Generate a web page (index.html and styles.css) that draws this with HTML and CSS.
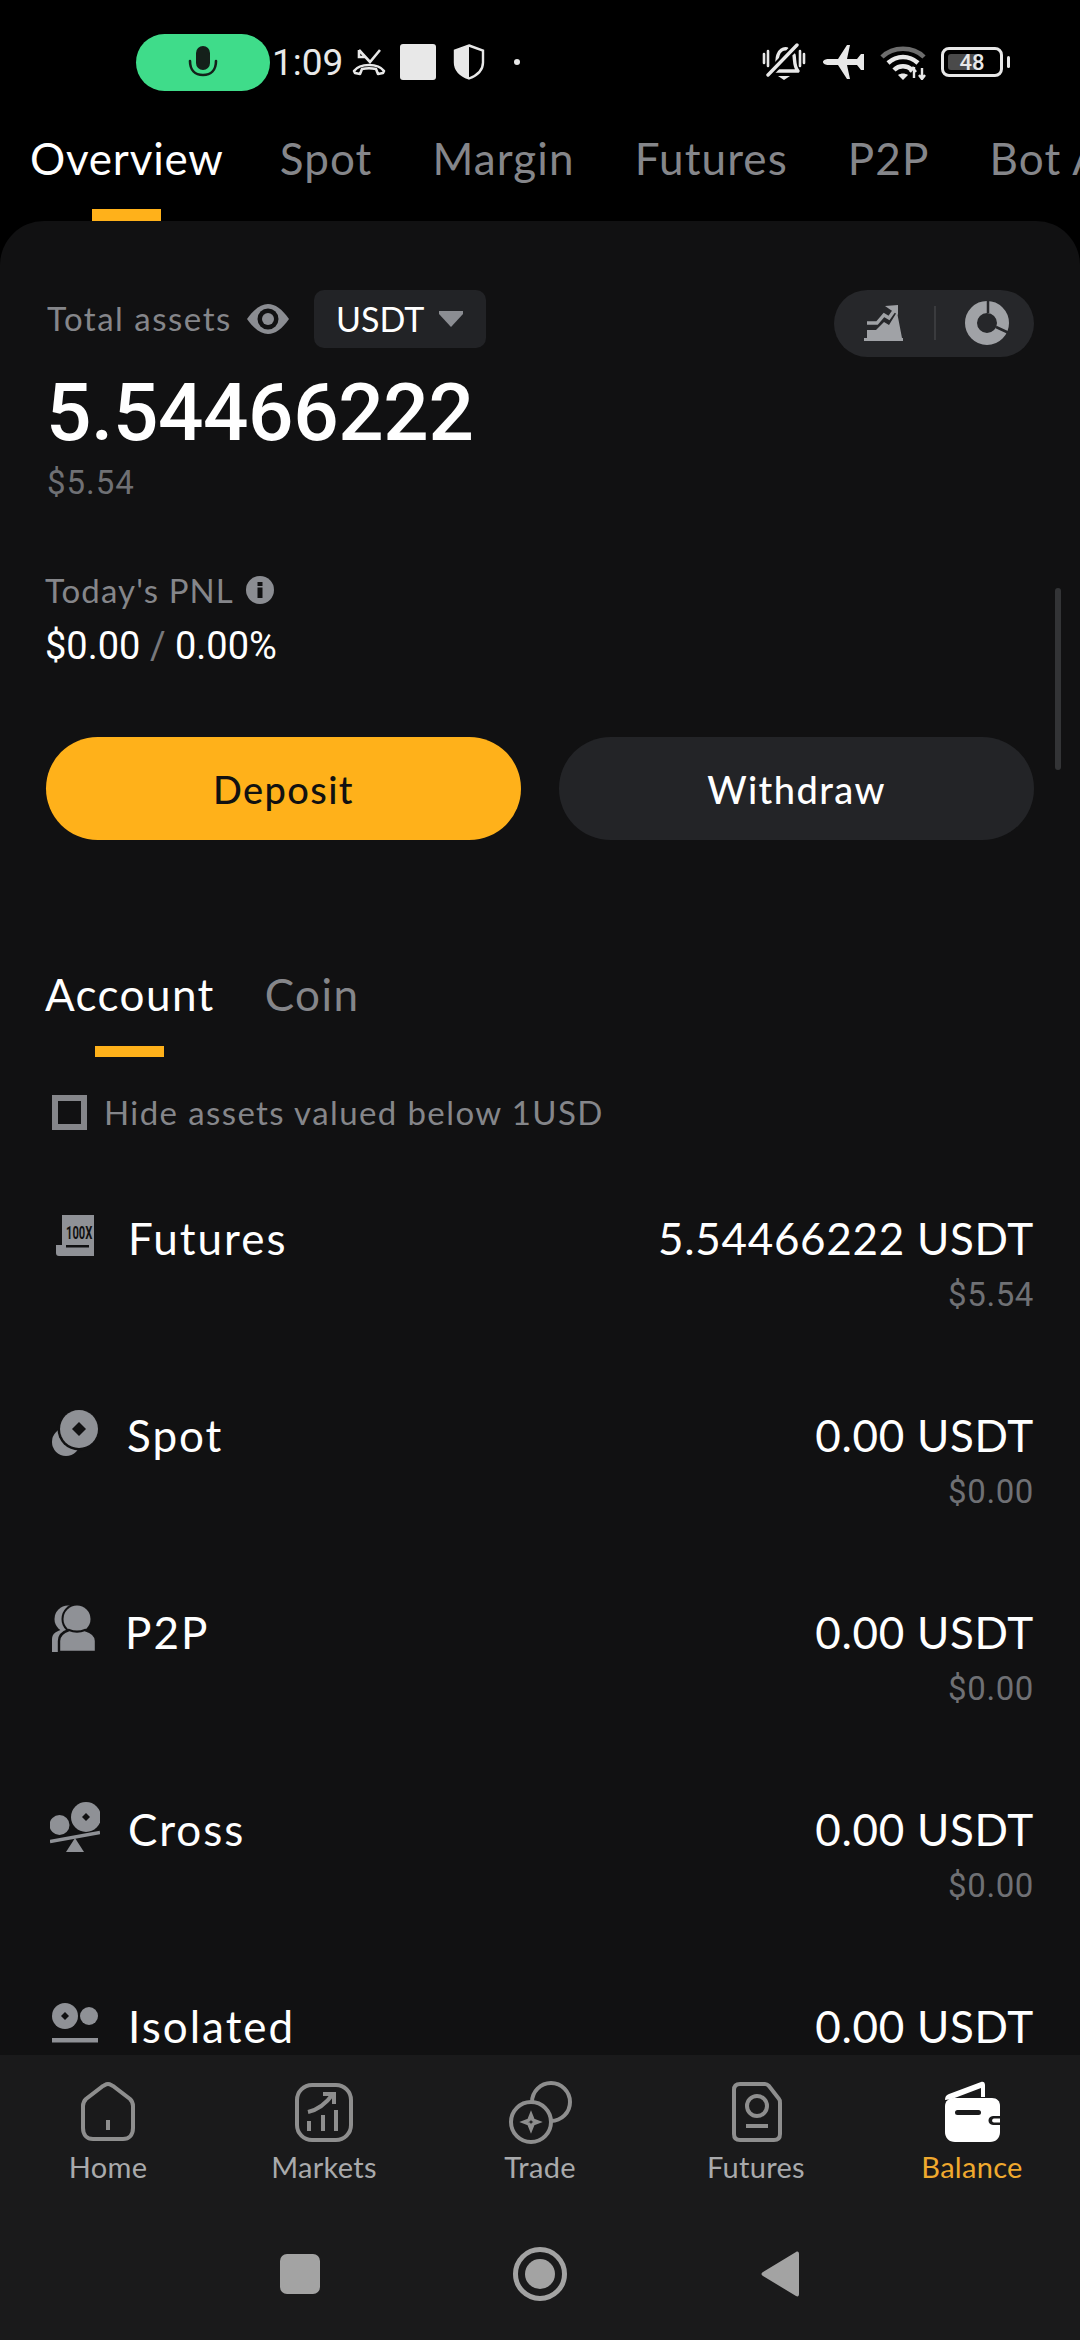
FILE: index.html
```html
<!DOCTYPE html>
<html lang="en">
<head>
<meta charset="utf-8">
<title>Balance</title>
<link rel="stylesheet" href="styles.css">
</head>
<body>
<div class="page">
  <header class="top">
    <div class="status">
      <div class="pill">
        <svg class="i-mic" viewBox="0 0 30 34"><rect x="8" y="1" width="14" height="24" rx="7" fill="#14201a"/><path d="M2 16c0 9 5 14 13 14s13-5 13-14" fill="none" stroke="#14201a" stroke-width="2.6" stroke-linecap="round"/></svg>
      </div>
      <span class="time">1:09</span>
      <svg class="i-call" viewBox="0 0 34 30"><path d="M7 3v7h7M7 3l11 12L28 3" fill="none" stroke="#e8e8e8" stroke-width="2.600"/><path d="M2 24c6-8 24-8 30 0l-1 2-5 1-2-5c-5-1-9-1-14 0l-2 5-5-1z" fill="none" stroke="#e8e8e8" stroke-width="2.600" stroke-linejoin="round"/></svg>
      <span class="sq"></span>
      <svg class="i-shield" viewBox="0 0 32 36"><path d="M16 1.500l14 5v12c0 8-6 13-14 16-8-3-14-8-14-16v-12z" fill="#000" stroke="#e8e8e8" stroke-width="2.400"/><path d="M16 1.500v33c-8-3-14-8-14-16v-12z" fill="#e8e8e8"/></svg>
      <span class="dot"></span>
      <div class="status-right">
        <svg class="i-bell" viewBox="0 0 44 38"><path d="M13 28c3-4 1-11 3-16 1-4 5-7 9-6l7 6c1 6 0 12 4 16H9z" fill="none" stroke="#e8e8e8" stroke-width="3.400" stroke-linejoin="round"/><path d="M5 33L36 1" stroke="#000" stroke-width="8"/><path d="M6 32L35 2" stroke="#e8e8e8" stroke-width="3.400" stroke-linecap="round"/><path d="M16 33h12l-6 4z" fill="#e8e8e8"/><path d="M2 11v9M6 8v15M38 8v15M42 11v9" stroke="#e8e8e8" stroke-width="2.600" stroke-linecap="round"/></svg>
        <svg class="i-plane" viewBox="0 0 44 36"><path d="M1 18c0-2 3-3 5-3h10L25 1h3l-3 14h10l4-5h3v16h-3l-4-5H25l3 14h-3L16 21H6c-2 0-5-1-5-3z" fill="#e8e8e8"/></svg>
        <svg class="i-wifi" viewBox="0 0 46 36"><path d="M2 13C13 2 33 2 44 13" fill="none" stroke="#6d6d6d" stroke-width="4.500"/><path d="M8 19c9-8 21-8 30 0" fill="none" stroke="#e8e8e8" stroke-width="4.500"/><path d="M14 26c5-5 13-5 18 0" fill="none" stroke="#e8e8e8" stroke-width="4.500"/><path d="M18 31c3-2 7-2 10 0l-5 5z" fill="#e8e8e8"/><path d="M34 23v11M36 28l-3-4-3 4M42 24v11M39 31l3 4 3-4" stroke="#e8e8e8" stroke-width="2.400" fill="none"/></svg>
        <div class="battery">
          <div class="batt-body"><span class="batt-fill"></span><span class="batt-num">48</span></div>
          <span class="batt-tip"></span>
        </div>
      </div>
    </div>
    <nav class="tabs">
      <div class="tab active"><span class="tab-text">Overview</span><span class="tab-bar"></span></div>
      <div class="tab"><span class="tab-text">Spot</span></div>
      <div class="tab"><span class="tab-text">Margin</span></div>
      <div class="tab"><span class="tab-text">Futures</span></div>
      <div class="tab"><span class="tab-text">P2P</span></div>
      <div class="tab"><span class="tab-text">Bot Assets</span></div>
    </nav>
  </header>

  <main class="panel">
    <span class="scrollbar"></span>
    <section class="summary">
      <div class="total-row">
        <span class="muted-label">Total assets</span>
        <svg class="i-eye" viewBox="0 0 42 32"><path d="M0 16C7 6 14 1 21 1s14 5 21 15C35 26 28 31 21 31S7 26 0 16z" fill="#8b8d92"/><circle cx="21" cy="16" r="10.500" fill="#111112"/><circle cx="21" cy="16" r="6" fill="#8b8d92"/></svg>
        <div class="chip"><span>USDT</span><svg class="i-caret" viewBox="0 0 24 16"><path d="M0 0h24v3L12 16 0 3z" fill="#8b8d92"/></svg></div>
        <div class="toggle">
          <svg class="i-stairs" viewBox="0 0 40 36"><path d="M0 33h39v3H0z" fill="#a0a2a6"/><path d="M3 33v-8h9l8-8 5 3 8-13 5 26z" fill="#a0a2a6"/><path d="M3 18h10l7-8 5 3 7-10" fill="none" stroke="#a0a2a6" stroke-width="3.400"/><path d="M21 1l13-1v10z" fill="#a0a2a6"/></svg>
          <span class="divider"></span>
          <svg class="i-donut" viewBox="0 0 44 44"><circle cx="22" cy="22" r="16" fill="none" stroke="#a0a2a6" stroke-width="12"/><path d="M23 12V0M31 26l13 6" stroke="#26272a" stroke-width="2.500"/></svg>
        </div>
      </div>
      <div class="big-num">5.54466222</div>
      <div class="usd">$5.54</div>
      <div class="pnl-row">
        <span class="muted-label">Today's PNL</span>
        <svg class="i-info" viewBox="0 0 28 28"><circle cx="14" cy="14" r="14" fill="#8b8d92"/><rect x="11.500" y="11.500" width="5" height="10.500" fill="#111112"/><rect x="11.500" y="6" width="5" height="4" fill="#111112"/></svg>
      </div>
      <div class="pnl-val">$0.00 <span class="slash">/</span> 0.00%</div>
      <div class="actions">
        <div class="btn btn-primary">Deposit</div>
        <div class="btn btn-dark">Withdraw</div>
      </div>
    </section>

    <section class="subtabs">
      <div class="sub active"><span class="sub-text">Account</span><span class="sub-bar"></span></div>
      <div class="sub"><span class="sub-text">Coin</span></div>
    </section>

    <div class="hide-row"><span class="check"></span><span class="muted-label">Hide assets valued below 1USD</span></div>

    <section class="rows">
      <div class="row">
        <svg class="ri ri-fut" viewBox="0 0 38 41"><path d="M6 0h32v41H3c-2 0-3-1-3-3v-8h6z" fill="#8f9196"/><text class="hundred" transform="translate(10 24) scale(.62 1)">100X</text><rect x="10" y="30" width="23" height="2.500" fill="#111112"/></svg>
        <span class="row-name">Futures</span>
        <div class="row-vals"><span class="row-val">5.54466222 USDT</span><span class="row-usd">$5.54</span></div>
      </div>
      <div class="row">
        <svg class="ri ri-spot" viewBox="0 0 46 46"><circle cx="14" cy="32" r="14" fill="#8f9196"/><circle cx="27" cy="19" r="21.500" fill="#111112"/><circle cx="27" cy="19" r="19" fill="#8f9196"/><path d="M27 12l7 7-7 7-7-7z" fill="#111112"/></svg>
        <span class="row-name row-name-spot">Spot</span>
        <div class="row-vals"><span class="row-val">0.00 USDT</span><span class="row-usd">$0.00</span></div>
      </div>
      <div class="row">
        <svg class="ri ri-p2p" viewBox="0 0 44 47"><circle cx="16" cy="14" r="13.500" fill="#8f9196"/><path d="M0 47V34c0-6 5-8 12-10h12v23z" fill="#8f9196"/><circle cx="25" cy="14" r="15.500" fill="#111112"/><circle cx="25" cy="14" r="13.500" fill="#8f9196"/><path d="M7 47V36c0-6 4-9 10-11 5 2 11 2 16 0 7 2 11 5 11 11v11z" fill="#8f9196" stroke="#111112" stroke-width="2.400"/></svg>
        <span class="row-name row-name-p2p">P2P</span>
        <div class="row-vals"><span class="row-val">0.00 USDT</span><span class="row-usd">$0.00</span></div>
      </div>
      <div class="row">
        <svg class="ri ri-cross" viewBox="0 0 50 50"><circle cx="9.500" cy="23" r="10" fill="#8f9196"/><circle cx="36" cy="15" r="15" fill="#8f9196"/><path d="M36 11l4 4-4 4-4-4z" fill="#111112"/><path d="M0 39.500l50-9" stroke="#8f9196" stroke-width="3.600"/><path d="M16 50h18l-9-14z" fill="#8f9196"/></svg>
        <span class="row-name">Cross</span>
        <div class="row-vals"><span class="row-val">0.00 USDT</span><span class="row-usd">$0.00</span></div>
      </div>
      <div class="row">
        <svg class="ri ri-iso" viewBox="0 0 46 40"><circle cx="13" cy="13" r="13" fill="#8f9196"/><path d="M13 9l4 4-4 4-4-4z" fill="#111112"/><circle cx="37" cy="13" r="9" fill="#8f9196"/><rect y="35" width="46" height="4.500" fill="#8f9196"/></svg>
        <span class="row-name">Isolated</span>
        <div class="row-vals"><span class="row-val">0.00 USDT</span></div>
      </div>
    </section>
  </main>

  <footer class="bottom">
    <nav class="nav">
      <div class="nav-item">
        <svg class="ni" viewBox="0 0 64 64"><path d="M32 4c2 0 3 1 5 2l17 13c2 2 3 4 3 7v22c0 7-4 11-10 11H17c-6 0-10-4-10-11V26c0-3 1-5 3-7L27 6c2-1 3-2 5-2z" fill="none" stroke="#8e8e8e" stroke-width="4"/><path d="M32 40v10" stroke="#8e8e8e" stroke-width="4"/></svg>
        <span>Home</span>
      </div>
      <div class="nav-item">
        <svg class="ni" viewBox="0 0 64 64"><rect x="5" y="5" width="54" height="55" rx="15" fill="none" stroke="#8e8e8e" stroke-width="4"/><path d="M16 32c9-2 17-7 25-18M31 14h11v10" fill="none" stroke="#8e8e8e" stroke-width="4"/><path d="M17 41v10M31 35v16M44 30v21" stroke="#8e8e8e" stroke-width="4"/></svg>
        <span>Markets</span>
      </div>
      <div class="nav-item">
        <svg class="ni" viewBox="0 0 64 64"><circle cx="43" cy="22" r="19" fill="none" stroke="#8e8e8e" stroke-width="4"/><circle cx="23" cy="42" r="20" fill="#1a1a1b" stroke="#8e8e8e" stroke-width="4"/><path d="M23 35l2 5 5 2-5 2-2 5-2-5-5-2 5-2z" fill="none" stroke="#8e8e8e" stroke-width="3.500"/></svg>
        <span>Trade</span>
      </div>
      <div class="nav-item">
        <svg class="ni" viewBox="0 0 64 64"><path d="M16 4h25c2 0 3 1 4 2l10 13c1 1 1 2 1 4v31c0 4-2 6-6 6H16c-4 0-6-2-6-6V10c0-4 2-6 6-6z" fill="none" stroke="#8e8e8e" stroke-width="4"/><circle cx="33" cy="26" r="10" fill="none" stroke="#8e8e8e" stroke-width="4"/><path d="M22 46h22" stroke="#8e8e8e" stroke-width="4"/></svg>
        <span>Futures</span>
      </div>
      <div class="nav-item nav-active">
        <svg class="ni" viewBox="0 0 64 64"><path d="M5 20c0-3 1-5 4-6L41 2c2-1 4 0 4 3v12h-4V8L12 19z" fill="#fff"/><path d="M14 18h38c5 0 8 3 8 8v26c0 6-4 10-10 10H15C9 62 5 58 5 52V26c0-5 4-8 9-8z" fill="#fff"/><rect x="15" y="30" width="26" height="5" rx="2.500" fill="#1a1a1b"/><path d="M60 36H53c-6 0-6 9 0 9h7z" fill="#1a1a1b"/><path d="M60 38.500h-6c-2.500 0-2.500 4 0 4h6z" fill="#fff"/></svg>
        <span>Balance</span>
      </div>
    </nav>
    <div class="sysnav">
      <span class="sys-square"></span>
      <span class="sys-circle"><span class="sys-core"></span></span>
      <svg class="sys-back" viewBox="0 0 38 46"><path d="M35 1c2-1 3 0 3 2v40c0 2-1 3-3 2L2 25c-2-1-2-3 0-4z" fill="#a3a3a3"/></svg>
    </div>
  </footer>
</div>
</body>
</html>
```
FILE: styles.css
```css
* { box-sizing: border-box; }
html, body { margin: 0; padding: 0; background: #000; }
body { font-family: "Lato", "Liberation Sans", sans-serif; color: #fff; }
.page { width: 1080px; height: 2340px; display: flex; flex-direction: column; overflow: hidden; background: #000; }

.top { flex: none; background: #000; }
.status { height: 124px; display: flex; align-items: center; padding-left: 136px; }
.pill { width: 134px; height: 57px; border-radius: 29px; background: #3fdc8a; display: flex; align-items: center; justify-content: center; }
.i-mic { width: 30px; height: 34px; }
.time { margin-left: 2px; font-size: 37px; color: #e8e8e8; width: 70px; font-family: "Roboto", sans-serif; }
.i-call { width: 34px; height: 30px; margin-left: 10px; }
.sq { width: 36px; height: 36px; margin-left: 14px; border-radius: 3px; background: #e8e8e8; }
.i-shield { width: 32px; height: 36px; margin-left: 17px; }
.dot { width: 6px; height: 6px; margin-left: 29px; border-radius: 50%; background: #e8e8e8; }
.status-right { margin-left: auto; padding-right: 70px; display: flex; align-items: center; }
.i-bell { width: 44px; height: 38px; }
.i-plane { width: 44px; height: 36px; margin-left: 16px; }
.i-wifi { width: 46px; height: 36px; margin-left: 14px; }
.battery { display: flex; align-items: center; margin-left: 15px; }
.batt-body { position: relative; width: 62px; height: 30px; border: 3px solid #e8e8e8; border-radius: 8px; display: flex; align-items: center; justify-content: center; }
.batt-fill { position: absolute; left: 4px; top: 4px; bottom: 4px; width: 29px; background: #4a4a4a; border-radius: 3px; }
.batt-num { position: relative; font-size: 22px; font-weight: 500; color: #e8e8e8; font-family: "Roboto", sans-serif; }
.batt-tip { width: 3px; height: 12px; margin-left: 4px; background: #e8e8e8; border-radius: 2px; }

.tabs { height: 97px; display: flex; gap: 60px; padding-left: 30px; overflow: hidden; white-space: nowrap; }
.tab { display: flex; flex-direction: column; align-items: center; flex: none; }
.tab-text { height: 68px; line-height: 68px; font-size: 44px; letter-spacing: 1.100px; color: #85868a; }
.tab.active { margin-right: -4px; }
.tab.active .tab-text { color: #fff; letter-spacing: .8px; }
.tab-bar { width: 69px; height: 12px; margin-top: 17px; background: #ffb11a; }

.panel { position: relative; flex: 1; min-height: 0; overflow: hidden; background: #111112; border-radius: 44px 44px 0 0; padding: 0 46px; }
.scrollbar { position: absolute; right: 19px; top: 367px; width: 6px; height: 182px; border-radius: 3px; background: #333436; }

.summary { padding-top: 69px; }
.muted-label { font-size: 33px; color: #85868a; line-height: 40px; letter-spacing: 1.400px; white-space: nowrap; }
.total-row { display: flex; align-items: center; height: 58px; }
.total-row .muted-label { margin-left: 1px; padding-bottom: 2px; letter-spacing: 1.500px; }
.i-eye { width: 42px; height: 32px; margin-left: 15px; }
.chip { width: 172px; height: 58px; margin-left: 25px; background: #222326; border-radius: 10px; display: flex; align-items: center; justify-content: center; gap: 15px; font-size: 34px; color: #fff; }
.chip span { padding-bottom: 2px; }
.i-caret { width: 24px; height: 16px; }
.toggle { width: 200px; height: 67px; margin-left: auto; margin-top: 8px; background: #26272a; border-radius: 34px; display: flex; align-items: center; padding-left: 30px; }
.i-stairs { width: 40px; height: 36px; }
.divider { width: 2px; height: 34px; margin-left: 30px; background: #3a3b3e; }
.i-donut { width: 44px; height: 44px; margin-left: 29px; }

.big-num { margin-top: 17px; font-size: 80px; line-height: 96px; font-weight: 500; letter-spacing: -.4px; font-family: "Roboto", sans-serif; white-space: nowrap; }
.usd { font-size: 33px; line-height: 40px; letter-spacing: 1px; color: #6f7074; margin-top: 2px; margin-left: 1px; font-family: "Roboto", sans-serif; }
.pnl-row { margin-top: 67px; margin-left: -1px; display: flex; align-items: center; gap: 12px; height: 40px; }
.pnl-row .muted-label { letter-spacing: 1.100px; }
.i-info { width: 28px; height: 28px; }
.pnl-val { margin-top: 13px; margin-left: -1px; font-size: 38px; line-height: 46px; white-space: nowrap; font-family: "Roboto", sans-serif; }
.slash { color: #77787c; }
.actions { margin-top: 68px; display: flex; justify-content: space-between; }
.btn { width: 475px; height: 103px; border-radius: 52px; display: flex; align-items: center; justify-content: center; font-size: 38px; font-weight: 500; letter-spacing: 1.400px; }
.btn-primary { background: #ffb11a; color: #111; }
.btn-dark { background: #232427; color: #fff; }

.subtabs { margin-top: 124px; display: flex; gap: 50px; margin-left: -1px; }
.sub { display: flex; flex-direction: column; align-items: center; }
.sub-text { font-size: 44px; line-height: 60px; letter-spacing: 1.400px; color: #85868a; }
.sub.active .sub-text { color: #fff; }
.sub-bar { width: 69px; height: 11px; margin-top: 22px; background: #ffb11a; }

.hide-row { margin-top: 35px; display: flex; align-items: center; padding-left: 6px; gap: 17px; }
.check { width: 35px; height: 35px; border: 6px solid #85868a; }

.rows { display: flex; flex-direction: column; margin-top: 76px; }
.row { height: 197px; flex: none; display: flex; align-items: flex-start; position: relative; }
.row-name { font-size: 44px; line-height: 60px; letter-spacing: 2px; margin-left: 82px; }
.row-name-spot { margin-left: 81px; }
.row-name-p2p { margin-left: 79px; }
.row-vals { margin-left: auto; display: flex; flex-direction: column; align-items: flex-end; }
.row-val { font-size: 44px; line-height: 60px; letter-spacing: .7px; white-space: nowrap; }
.row-usd { font-size: 33px; line-height: 40px; letter-spacing: .6px; margin-top: 7px; color: #6f7074; font-family: "Roboto", sans-serif; }
.ri { position: absolute; left: 6px; }
.ri-fut { left: 10px; top: 7px; width: 38px; height: 41px; }
.ri-spot { top: 5px; width: 46px; height: 46px; }
.ri-p2p { top: 3px; width: 44px; height: 47px; }
.ri-cross { left: 4px; top: 3px; width: 50px; height: 50px; }
.ri-iso { top: 7px; width: 46px; height: 40px; }
.hundred { font-family: "Roboto", sans-serif; font-size: 18px; font-weight: 700; fill: #111112; }

.bottom { flex: none; height: 285px; background: #1a1a1b; }
.nav { height: 152px; display: grid; grid-template-columns: repeat(5, 1fr); padding-top: 25px; }
.nav-item { display: flex; flex-direction: column; align-items: center; font-size: 29px; letter-spacing: .3px; color: #a9aaac; }
.nav-item span { line-height: 38px; margin-top: 4px; }
.ni { width: 64px; height: 64px; }
.nav-active { color: #f0a92e; }
.sysnav { height: 133px; position: relative; }
.sys-square { position: absolute; left: 280px; top: 47px; width: 40px; height: 40px; background: #a3a3a3; border-radius: 7px; }
.sys-circle { position: absolute; left: 513px; top: 40px; width: 54px; height: 54px; border: 5px solid #a3a3a3; border-radius: 50%; display: flex; align-items: center; justify-content: center; }
.sys-core { width: 30px; height: 30px; border-radius: 50%; background: #a3a3a3; }
.sys-back { position: absolute; left: 761px; top: 44px; width: 38px; height: 46px; }
```
